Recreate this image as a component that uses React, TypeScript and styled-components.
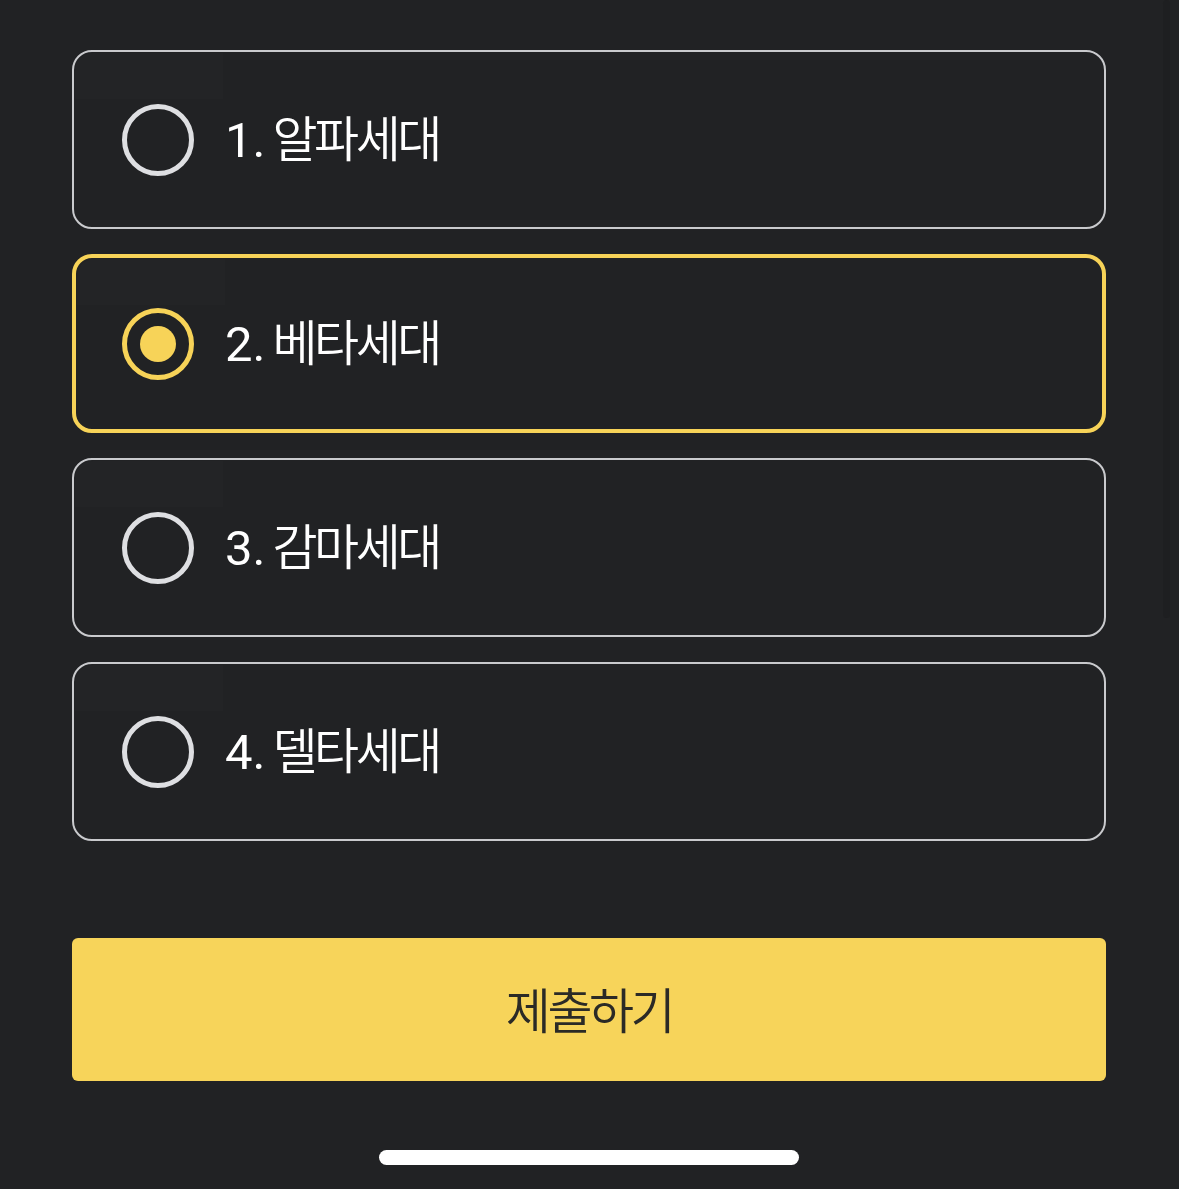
import React, { useState } from 'react';
import styled, { createGlobalStyle } from 'styled-components';

const GlobalStyle = createGlobalStyle`
  html, body {
    margin: 0;
    padding: 0;
    background: #212224;
  }
  * {
    box-sizing: border-box;
  }
`;

const Screen = styled.div`
  position: relative;
  width: 1179px;
  height: 1189px;
  overflow: hidden;
  background: #212224;
  font-family: 'Roboto', 'Noto Sans CJK KR', sans-serif;
  display: flex;
  flex-direction: column;
  padding: 50px 73px 0 72px;
`;

const ScrollTrack = styled.div`
  position: absolute;
  top: 0;
  right: 9px;
  width: 7px;
  height: 618px;
  border-radius: 4px;
  background: #1e1f21;
`;

const OptionList = styled.div`
  display: flex;
  flex-direction: column;
  gap: 25px;
`;

const OptionCard = styled.button<{ selected: boolean }>`
  position: relative;
  display: flex;
  align-items: center;
  gap: 32px;
  height: 179px;
  width: 100%;
  padding: 0 0 0 ${({ selected }) => (selected ? '46px' : '48px')};
  border: ${({ selected }) => (selected ? '4px solid #f7d358' : '2px solid #c9cacd')};
  border-radius: 20px;
  background: transparent;
  cursor: pointer;
  font: inherit;
  text-align: left;

  &::before {
    content: '';
    position: absolute;
    top: 1px;
    left: 1px;
    width: 148px;
    height: 46px;
    background: rgba(255, 255, 255, 0.012);
    border-top-left-radius: 18px;
  }
`;

const Radio = styled.span<{ selected: boolean }>`
  flex: none;
  width: 72px;
  height: 72px;
  border-radius: 50%;
  border: 5px solid ${({ selected }) => (selected ? '#f7d358' : '#dedfe2')};
  display: flex;
  align-items: center;
  justify-content: center;

  &::after {
    content: '';
    display: ${({ selected }) => (selected ? 'block' : 'none')};
    width: 36px;
    height: 36px;
    border-radius: 50%;
    background: #f7d358;
  }
`;

const OptionLabel = styled.span`
  color: #ffffff;
  font-size: 49px;
  line-height: 1;
  margin: -4px 0 0 -1px;
  white-space: nowrap;
`;

const OptionNumber = styled.span`
  font-family: 'Roboto', sans-serif;
  font-weight: 400;
  margin-right: 7px;
`;

const OptionWord = styled.span`
  font-family: 'Noto Sans CJK KR', sans-serif;
  font-weight: 350;
  letter-spacing: -3.5px;
`;

const SubmitButton = styled.button`
  margin-top: 97px;
  width: 100%;
  height: 143px;
  padding-bottom: 6px;
  border: 0;
  border-radius: 6px;
  background: #f7d45a;
  color: #2b2a26;
  font-family: 'Noto Sans CJK KR', sans-serif;
  font-size: 49px;
  font-weight: 350;
  letter-spacing: -3.5px;
  cursor: pointer;
`;

const HomeBar = styled.div`
  align-self: center;
  margin: 69px 0 0 -1px;
  width: 420px;
  height: 15px;
  border-radius: 8px;
  background: #ffffff;
`;

const options = ['알파세대', '베타세대', '감마세대', '델타세대'];

export default function App() {
  const [selected, setSelected] = useState(1);

  return (
    <>
      <GlobalStyle />
      <Screen>
        <ScrollTrack />
        <OptionList>
          {options.map((word, index) => (
            <OptionCard
              key={word}
              selected={selected === index}
              onClick={() => setSelected(index)}
            >
              <Radio selected={selected === index} />
              <OptionLabel>
                <OptionNumber>{index + 1}.</OptionNumber>
                <OptionWord>{word}</OptionWord>
              </OptionLabel>
            </OptionCard>
          ))}
        </OptionList>
        <SubmitButton>제출하기</SubmitButton>
        <HomeBar />
      </Screen>
    </>
  );
}
